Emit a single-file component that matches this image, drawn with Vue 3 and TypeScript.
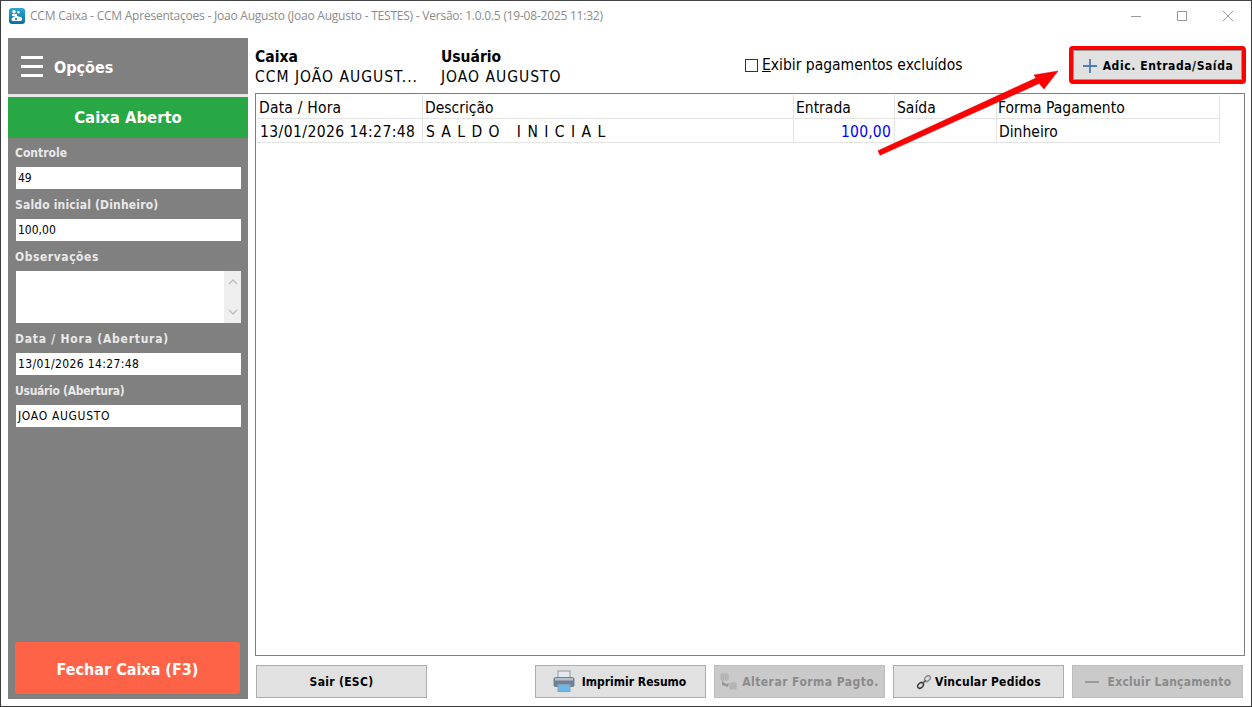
<script setup lang="ts">
interface Field { label: string; value: string; cls: string }
const topFields: Field[] = [
  { label: 'Controle', value: '49', cls: 'f-plain' },
  { label: 'Saldo inicial (Dinheiro)', value: '100,00', cls: 'f-saldo' },
]
const bottomFields: Field[] = [
  { label: 'Data / Hora (Abertura)', value: '13/01/2026 14:27:48', cls: 'f-data' },
  { label: 'Usuário (Abertura)', value: 'JOAO AUGUSTO', cls: 'f-user' },
]
</script>

<template>
  <div class="window">
    <header class="titlebar">
      <svg class="logo" width="16" height="16" viewBox="0 0 16 16">
        <defs>
          <linearGradient id="lg" x1="0" y1="0" x2="0" y2="1">
            <stop offset="0" stop-color="#2aa9d6" />
            <stop offset="1" stop-color="#0b6e9e" />
          </linearGradient>
        </defs>
        <rect width="16" height="16" rx="3" fill="url(#lg)" />
        <circle cx="5" cy="3.8" r="1.7" fill="#fff" />
        <circle cx="9.5" cy="4.2" r="1.2" fill="#fff" />
        <rect x="3" y="6" width="5" height="2" fill="#fff" />
        <path d="M4 13c-2 0-2-3 0-3.5C5 7.500 9 7.500 10 9c2-1 4 1 3 3-.5 1-2 1-3 1z" fill="#fff" />
        <circle cx="7" cy="11" r="1.200" fill="#2a93c0" />
      </svg>
      <span class="title">CCM Caixa - CCM Apresentaçoes - Joao Augusto (Joao Augusto - TESTES) - Versão: 1.0.0.5 (19-08-2025 11:32)</span>
      <div class="winctl">
        <svg width="12" height="12" viewBox="0 0 12 12"><path d="M1 6.500h10" stroke="#9a9a9a" fill="none" /></svg>
        <svg width="12" height="12" viewBox="0 0 12 12"><rect x="1.500" y="1.500" width="9" height="9" stroke="#9a9a9a" fill="none" /></svg>
        <svg width="12" height="12" viewBox="0 0 12 12"><path d="M1 1l10 10M11 1L1 11" stroke="#9a9a9a" fill="none" /></svg>
      </div>
    </header>

    <div class="content">
      <aside class="sidebar">
        <div class="menu">
          <span class="burger"><i></i><i></i><i></i></span>
          <span class="menu-text">Opções</span>
        </div>
        <div class="status">Caixa Aberto</div>
        <div class="fields">
          <div v-for="f in topFields" :key="f.label" class="field" :class="f.cls">
            <label>{{ f.label }}</label>
            <div class="input">{{ f.value }}</div>
          </div>
          <div class="field f-obs">
            <label>Observações</label>
            <div class="textarea">
              <div class="scroll">
                <svg width="10" height="8" viewBox="0 0 10 8"><path d="M1 6l4-4 4 4" stroke="#c0c0c0" stroke-width="1.400" fill="none" /></svg>
                <svg width="10" height="8" viewBox="0 0 10 8"><path d="M1 2l4 4 4-4" stroke="#c0c0c0" stroke-width="1.400" fill="none" /></svg>
              </div>
            </div>
          </div>
          <div v-for="f in bottomFields" :key="f.label" class="field" :class="f.cls">
            <label>{{ f.label }}</label>
            <div class="input">{{ f.value }}</div>
          </div>
        </div>
        <button class="close-btn">Fechar Caixa (F3)</button>
      </aside>

      <main class="main">
        <div class="info">
          <div class="info-col col-caixa">
            <strong>Caixa</strong>
            <span>CCM JOÃO AUGUST...</span>
          </div>
          <div class="info-col col-user">
            <strong>Usuário</strong>
            <span>JOAO AUGUSTO</span>
          </div>
          <label class="check"><i class="box"></i><span><u>E</u>xibir pagamentos excluídos</span></label>
          <div class="add-frame">
            <button class="btn add-btn">
              <svg width="16" height="16" viewBox="0 0 16 16"><path d="M8 1v14M1 8h14" stroke="#4a7fb5" stroke-width="1.800" fill="none" /></svg>
              Adic. Entrada/Saída
            </button>
          </div>
        </div>

        <div class="grid">
          <div class="row head">
            <div class="cell c-first">Data / Hora</div>
            <div class="cell">Descrição</div>
            <div class="cell">Entrada</div>
            <div class="cell">Saída</div>
            <div class="cell c-last">Forma Pagamento</div>
          </div>
          <div class="row">
            <div class="cell date">13/01/2026 14:27:48</div>
            <div class="cell desc">S A L D O &nbsp; I N I C I A L</div>
            <div class="cell num">100,00</div>
            <div class="cell"></div>
            <div class="cell">Dinheiro</div>
          </div>
        </div>

        <footer class="actions">
          <button class="btn b-sair">Sair (ESC)</button>
          <span class="spacer"></span>
          <button class="btn b-print">
            <svg width="24" height="23" viewBox="0 0 24 23">
              <rect x="6" y="1" width="12" height="8" fill="#e6eaef" stroke="#8d9aa8" />
              <rect x="1.500" y="7" width="21" height="10" rx="2.500" fill="#6d8095" />
              <rect x="3" y="8" width="18" height="2.500" fill="#b5c0cc" />
              <rect x="6" y="14.500" width="12" height="7" fill="#6cb8ea" stroke="#8aa2b8" />
            </svg>
            Imprimir Resumo
          </button>
          <button class="btn disabled b-alt">
            <svg width="17" height="17" viewBox="0 0 17 17">
              <path d="M1 1h7v6H1zM3.300 1v6M5.600 1v6M1 3h7M1 5h7" stroke="#a8a8a8" fill="none" stroke-width=".8" />
              <path d="M10 10h6v6h-6zM12 10v6M14 10v6M10 12h6M10 14h6" stroke="#a8a8a8" fill="none" stroke-width=".8" />
              <path d="M2 8l4 3 3-1-1 4-6-2z" fill="#979797" />
            </svg>
            Alterar Forma Pagto.
          </button>
          <button class="btn b-link">
            <svg width="16" height="16" viewBox="0 0 16 16" fill="none" stroke-width="1.500">
              <ellipse cx="4.600" cy="11.400" rx="3.300" ry="2.300" transform="rotate(-45 4.600 11.400)" stroke="#3a3a3a" />
              <ellipse cx="11.400" cy="4.600" rx="3.300" ry="2.300" transform="rotate(-45 11.400 4.600)" stroke="#8a8a8a" />
              <path d="M6.200 9.800l3.600-3.600" stroke="#555" />
            </svg>
            Vincular Pedidos
          </button>
          <button class="btn disabled b-exc">
            <svg width="16" height="16" viewBox="0 0 16 16"><path d="M1 8h14" stroke="#9a9a9a" stroke-width="2" fill="none" /></svg>
            Excluir Lançamento
          </button>
        </footer>
      </main>
    </div>

    <svg class="arrow" width="190" height="92" viewBox="0 0 190 92">
      <path d="M2 84.700L160 12l-2-3 24-4-14 18-5-5.500L4 89.300z" fill="#f00" stroke="#d80000" stroke-width=".5" />
    </svg>
  </div>
</template>

<style>
html, body { margin: 0; background: #fff; overflow: hidden; }
</style>

<style scoped>
.window {
  position: relative;
  box-sizing: border-box;
  width: 1252px;
  height: 707px;
  border: 1px solid #3a3a3a;
  border-top-color: #444;
  display: flex;
  flex-direction: column;
  background: #fff;
  font-family: "DejaVu Sans", sans-serif;
  font-stretch: condensed;
  color: #000;
}
.titlebar {
  height: 37px;
  flex: none;
  display: flex;
  align-items: flex-start;
  padding: 7px 0 0 8px;
  box-sizing: border-box;
}
.logo { flex: none; }
.title {
  margin-left: 5px;
  font: 12px/16px "Open Sans", sans-serif;
  letter-spacing: -0.225px;
  color: #8c8c8c;
  white-space: nowrap;
}
.winctl {
  margin-left: auto;
  display: flex;
  gap: 34px;
  padding: 2px 17px 0 0;
}
.content {
  flex: 1;
  display: flex;
  padding: 0 7px 7px 7px;
  min-height: 0;
}
.sidebar {
  width: 240px;
  flex: none;
  background: #808080;
  display: flex;
  flex-direction: column;
}
.menu {
  height: 56px;
  flex: none;
  display: flex;
  align-items: center;
  padding-left: 13px;
  gap: 11px;
  color: #fff;
  border-bottom: 3px solid #e8e8e8;
}
.burger { display: flex; flex-direction: column; gap: 6px; width: 22px; }
.burger i { display: block; height: 3px; background: #fff; }
.menu-text { font-size: 16px; font-weight: 700; padding-top: 3px; }
.status {
  height: 41px;
  flex: none;
  background: #28a745;
  color: #fff;
  font-size: 16.500px;
  font-weight: 700;
  line-height: 41px;
  text-align: center;
}
.fields { padding: 7px 7px 0 8px; flex: 1; display: flex; flex-direction: column; gap: 8px; }
.field { display: flex; flex-direction: column; }
.field label {
  height: 22px;
  line-height: 16px;
  color: #e9e9e9;
  font-size: 12px;
  font-weight: 700;
  margin-left: -1px;
}
.f-saldo label { letter-spacing: .17px; }
.f-obs label { letter-spacing: .55px; }
.f-data label { letter-spacing: .77px; }
.f-user label { letter-spacing: -.28px; }
.input {
  height: 22px;
  background: #fff;
  width: 225px;
  line-height: 22px;
  font-size: 12px;
  padding-left: 2px;
  box-sizing: border-box;
}
.f-data .input { letter-spacing: .37px; }
.f-user .input { letter-spacing: .67px; }
.textarea {
  height: 52px;
  width: 225px;
  background: #fff;
  display: flex;
  justify-content: flex-end;
}
.scroll {
  width: 17px;
  background: #efefef;
  display: flex;
  flex-direction: column;
  align-items: center;
  justify-content: space-between;
  padding: 7px 0;
  box-sizing: border-box;
}
.close-btn {
  flex: none;
  align-self: flex-start;
  margin: 0 0 5px 7px;
  width: 225px;
  height: 52px;
  border: 0;
  border-radius: 3px;
  background: #ff6347;
  color: #fff;
  font: inherit;
  font-size: 16px;
  font-weight: 700;
  padding: 3px 0 0;
}
.main { flex: 1; min-width: 0; padding-left: 7px; display: flex; flex-direction: column; }
.info { height: 55px; flex: none; display: flex; align-items: flex-start; }
.info-col { display: flex; flex-direction: column; font-size: 15.500px; line-height: 20px; padding-top: 9px; }
.info-col strong { font-weight: 700; }
.info-col span { letter-spacing: 1px; white-space: nowrap; }
.col-caixa { width: 186px; }
.col-user { width: 304px; }
.check {
  display: flex;
  align-items: center;
  gap: 4px;
  font-size: 15.500px;
  line-height: 20px;
  padding-top: 17px;
}
.box { width: 11px; height: 11px; border: 1px solid #333; display: block; }
.add-frame {
  position: absolute;
  right: 5px;
  top: 45px;
  box-sizing: border-box;
  width: 177px;
  height: 38px;
  border: 4px solid #f00;
  border-radius: 4px;
  display: flex;
}
.btn {
  height: 33px;
  width: 171px;
  flex: none;
  background: #e1e1e1;
  border: 1px solid #adadad;
  box-sizing: border-box;
  font: inherit;
  font-size: 12px;
  font-weight: 700;
  color: #000;
  display: flex;
  align-items: center;
  justify-content: center;
  gap: 5px;
  padding: 0;
  white-space: nowrap;
}
.btn.add-btn { width: 100%; height: 100%; border-color: #999; letter-spacing: .58px; padding-top: 1px; }
.btn.disabled { background: #cacaca; color: #8a8a8a; border-color: #bdbdbd; }
.b-sair { letter-spacing: .3px; }
.b-print { gap: 6px; padding-right: 3px; }
.b-alt { letter-spacing: .45px; }
.b-link { letter-spacing: .25px; gap: 3px; }
.b-exc { letter-spacing: .25px; gap: 8px; }
.grid {
  flex: none;
  height: 563px;
  box-sizing: border-box;
  border: 1px solid #808080;
  padding: 1px;
  width: 990px;
}
.row {
  display: grid;
  grid-template-columns: 166px 371px 101px 102px 223px;
  height: 24px;
  border-bottom: 1px solid #e4e4e4;
  box-sizing: border-box;
  width: 963px;
}
.cell {
  border-right: 1px solid #e4e4e4;
  font-size: 15.500px;
  line-height: 26px;
  padding-left: 2px;
  white-space: nowrap;
  overflow: hidden;
}
.c-first { padding-left: 2px; letter-spacing: .2px; }
.c-last { padding-left: 1px; }
.cell.date { padding-left: 3px; letter-spacing: .42px; }
.cell.desc { padding-left: 3px; letter-spacing: 1px; }
.cell.num { color: #0000ff; text-align: right; padding-right: 3px; letter-spacing: .2px; }
.actions {
  margin-top: 9px;
  display: flex;
  gap: 8px;
  padding-left: 1px;
}
.spacer { flex: 0 0 92px; }
.arrow {
  position: absolute;
  left: 875px;
  top: 65px;
  pointer-events: none;
}
</style>
